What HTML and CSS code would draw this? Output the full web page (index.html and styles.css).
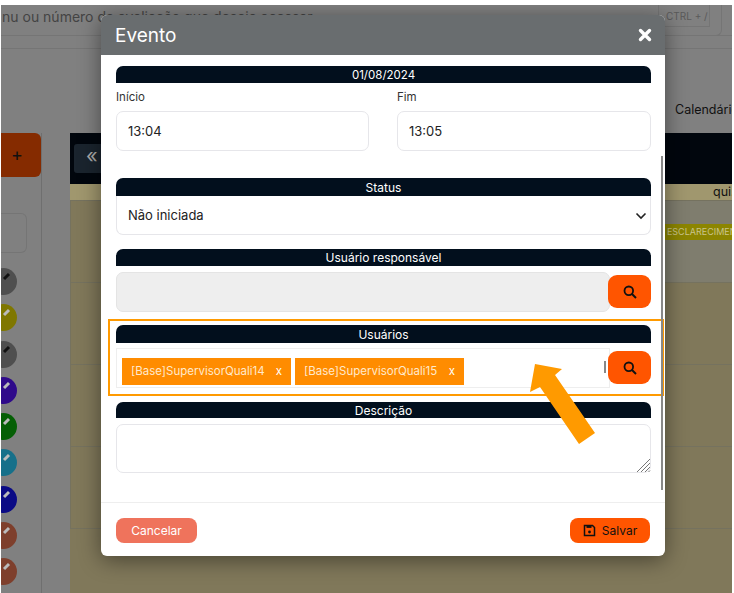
FILE: index.html
```html
<!DOCTYPE html>
<html lang="pt-BR">
<head>
  <meta charset="UTF-8">
  <title>Evento</title>
  <link rel="stylesheet" href="styles.css">
</head>
<body>
  <div class="screen">
    <div class="topbar">
      <span class="search-hint">nu ou número da avaliação que deseja acessar</span>
      <div class="shortcut-box"><span class="shortcut">CTRL + /</span></div>
    </div>
    <div class="subbar"></div>
    <div class="tabs"><span>Calendário</span></div>
    <div class="workspace">
      <div class="side">
        <div class="add-btn">+</div>
        <div class="side-search"></div>
        <div class="dots">
          <span class="dot dot-gray"></span>
          <span class="dot dot-olive"></span>
          <span class="dot dot-gray"></span>
          <span class="dot dot-purple"></span>
          <span class="dot dot-green"></span>
          <span class="dot dot-teal"></span>
          <span class="dot dot-navy"></span>
          <span class="dot dot-brown"></span>
          <span class="dot dot-brown"></span>
        </div>
      </div>
      <div class="calendar">
        <div class="cal-head"><span class="cal-prev">«</span></div>
        <div class="cal-days">
          <span></span><span></span><span></span><span></span><span class="day-name">qui.</span>
        </div>
        <div class="cal-grid">
          <span></span><span></span><span></span><span></span>
          <span class="cell-today"><em class="cal-event">DO ESCLARECIMENTO</em></span>
          <span></span><span></span><span></span><span></span><span></span>
          <span></span><span></span><span></span><span></span><span></span>
          <span></span><span></span><span></span><span></span><span></span>
        </div>
      </div>
    </div>

    <div class="modal">
      <div class="modal-header">
        <h1>Evento</h1>
        <svg class="close" width="14" height="14" viewBox="0 0 14 14"><path d="M2.5 2.5l9 9M11.5 2.5l-9 9" stroke="#fff" stroke-width="3.4" stroke-linecap="round"/></svg>
      </div>
      <div class="modal-body">
        <div class="strip strip-date">01/08/2024</div>
        <div class="times">
          <div>
            <label>Início</label>
            <input class="field" type="text" value="13:04">
          </div>
          <div>
            <label>Fim</label>
            <input class="field" type="text" value="13:05">
          </div>
        </div>

        <div class="strip strip-status">Status</div>
        <div class="select-wrap">
          <select class="field field-select">
            <option>Não iniciada</option>
          </select>
          <svg class="chevron" width="12" height="8" viewBox="0 0 12 8"><path d="M1.5 1.5L6 6l4.5-4.5" fill="none" stroke="#222" stroke-width="1.6"/></svg>
        </div>

        <div class="strip strip-owner">Usuário responsável</div>
        <div class="picker">
          <div class="picker-box picker-disabled"></div>
          <button class="search-btn">
            <svg width="14" height="14" viewBox="0 0 14 14"><circle cx="5.8" cy="5.8" r="4.3" fill="none" stroke="#111" stroke-width="1.8"/><path d="M9 9l4 4" stroke="#111" stroke-width="2"/></svg>
          </button>
        </div>

        <div class="highlight">
          <div class="strip strip-users">Usuários</div>
          <div class="picker picker-users">
            <div class="picker-box">
              <span class="chip">[Base]SupervisorQuali14 <b>x</b></span>
              <span class="chip">[Base]SupervisorQuali15 <b>x</b></span>
              <i class="thumb"></i>
            </div>
            <button class="search-btn">
              <svg width="14" height="14" viewBox="0 0 14 14"><circle cx="5.8" cy="5.8" r="4.3" fill="none" stroke="#111" stroke-width="1.8"/><path d="M9 9l4 4" stroke="#111" stroke-width="2"/></svg>
            </button>
          </div>
        </div>

        <div class="strip strip-desc">Descrição</div>
        <div class="desc-wrap">
          <textarea class="field field-desc"></textarea>
          <svg class="grip" width="15" height="15" viewBox="0 0 15 15"><path d="M14 1L1 14M14 5L5 14M14 9L9 14M14 12.5L12.5 14" stroke="#777" stroke-width="1"/></svg>
        </div>

        <i class="scrollbar"></i>
        <svg class="arrow" width="68" height="82" viewBox="0 0 68 82"><polygon points="5,2 32,7 25,13 65,71 49,82 10,25 0,30" fill="#ff9a00"/></svg>
      </div>
      <div class="modal-footer">
        <button class="btn btn-cancel">Cancelar</button>
        <button class="btn btn-save">
          <svg width="13" height="13" viewBox="0 0 13 13"><path d="M1.5 1.5h8l2 2v8h-10z" fill="none" stroke="#111" stroke-width="1.5"/><rect x="3.5" y="1.5" width="5" height="2.4" fill="#111"/><circle cx="6.5" cy="8" r="1.4" fill="#111"/></svg>
          Salvar
        </button>
      </div>
    </div>
  </div>
</body>
</html>
```

FILE: styles.css
```css
:root {
  --dark: #020f1d;
  --orange: #ff5500;
  --amber: #ff9a00;
  --line: #e6e6ea;
}

* {
  box-sizing: border-box;
}

body {
  margin: 0;
  background: #fff;
  font-family: "Inter", "Liberation Sans", sans-serif;
  color: #222;
}

.screen {
  position: relative;
  margin: 5px 2px 0 1px;
  height: 588px;
  background: #808080;
  overflow: hidden;
}

/* page behind the modal */
.topbar {
  display: flex;
  justify-content: space-between;
  height: 31px;
  padding: 0 10px 0 1px;
  border-bottom: 1px solid #757575;
}

.search-hint {
  margin-top: 2px;
  font-size: 14px;
  line-height: 20px;
  color: #444;
}

.shortcut-box {
  width: 64px;
  height: 31px;
  padding-right: 11px;
  border-right: 1px solid #757575;
  border-bottom: 1px solid #757575;
  border-radius: 0 0 6px 0;
}

.shortcut {
  display: block;
  height: 22px;
  padding-left: 7px;
  border: 1px solid #757575;
  border-top: 0;
  font-size: 10px;
  line-height: 22px;
  color: #5a5a5a;
  white-space: nowrap;
}

.subbar {
  height: 13px;
  border-bottom: 1px solid #757575;
}

.tabs {
  display: flex;
  justify-content: flex-end;
  height: 84px;
  padding-top: 53px;
  font-size: 12.5px;
  line-height: 16px;
  color: #111;
  white-space: nowrap;
}

.tabs span {
  width: 57px;
  overflow: hidden;
}

.workspace {
  display: flex;
  gap: 28px;
}

.side {
  flex: none;
  width: 41px;
  height: 460px;
  border-right: 1px solid #6f6f6f;
}

.add-btn {
  height: 44px;
  padding-right: 18px;
  background: #852b00;
  border-radius: 0 6px 6px 0;
  text-align: right;
  font-size: 18px;
  line-height: 44px;
  color: #111;
}

.side-search {
  width: 26px;
  height: 40px;
  margin-top: 36px;
  border: 1px solid #757575;
  border-left: 0;
  border-radius: 0 6px 6px 0;
}

.dots {
  display: flex;
  flex-direction: column;
  gap: 9.3px;
  margin: 15px 0 0 -11px;
}

.dot {
  position: relative;
  display: block;
  width: 27px;
  height: 27px;
  flex: none;
  border-radius: 50%;
}

.dot::after {
  content: "";
  position: absolute;
  left: 13px;
  top: 7px;
  width: 7px;
  height: 3px;
  background: #bbb;
  transform: rotate(-45deg);
}

.dot-gray { background: #4f4f4f; }
.dot-gray::after { background: #111; }
.dot-olive { background: #7f7700; }
.dot-purple { background: #2f0a8a; }
.dot-green { background: #055f05; }
.dot-teal { background: #16708a; }
.dot-navy { background: #0a0a85; }
.dot-brown { background: #7e3f2c; }

.calendar {
  flex: 1;
  min-width: 0;
  background: #80785a;
}

.cal-head {
  height: 51px;
  padding: 11px 4px;
  background: #01060d;
}

.cal-prev {
  display: block;
  width: 40px;
  height: 29px;
  background: #1a242e;
  border-radius: 3px;
  padding-left: 12px;
  font-size: 20px;
  line-height: 25px;
  color: #aaa;
}

.cal-days,
.cal-grid {
  display: grid;
  grid-template-columns: repeat(4, 145px) 1fr;
}

.cal-days {
  height: 17px;
  background: #a0976e;
  border-bottom: 1px solid #75725f;
}

.day-name {
  padding-left: 63px;
  font-size: 12.5px;
  line-height: 16px;
  color: #111;
  white-space: nowrap;
}

.cal-grid {
  grid-auto-rows: 82px;
}

.cal-grid span {
  min-width: 0;
  border-left: 1px solid #75725f;
  border-bottom: 1px solid #75725f;
}

.cal-grid .cell-today {
  padding-top: 23px;
  background: #7f7d6e;
  overflow: hidden;
}

.cal-event {
  display: block;
  height: 16px;
  background: #8c8500;
  font-style: normal;
  font-size: 9px;
  line-height: 16px;
  color: #c9c48a;
  white-space: nowrap;
}

/* modal */
.modal {
  position: absolute;
  left: 100px;
  top: 10px;
  width: 564px;
  height: 541px;
  background: #fff;
  border-radius: 6px;
  box-shadow: 0 4px 22px rgba(0, 0, 0, 0.45);
}

.modal-header {
  display: flex;
  align-items: center;
  justify-content: space-between;
  height: 40px;
  padding: 0 13px 0 14px;
  background: #696d6f;
  border-radius: 6px 6px 0 0;
}

.modal-header h1 {
  margin: 0;
  font-size: 19px;
  font-weight: 400;
  color: #fff;
}

.modal-body {
  position: relative;
  height: 447px;
  padding: 11px 14px 0 15px;
}

.strip {
  background: var(--dark);
  border-radius: 7px 7px 0 0;
  text-align: center;
  font-size: 12px;
  color: #fff;
}

.strip-date { height: 17px; line-height: 18px; font-size: 11.5px; }
.strip-status { height: 18px; line-height: 19px; margin-top: 27px; }
.strip-owner { height: 17px; line-height: 18px; margin-top: 14px; }
.strip-users { height: 18px; line-height: 19px; }
.strip-desc { height: 16px; line-height: 17px; margin-top: 6px; }

.times {
  display: grid;
  grid-template-columns: 253px 254px;
  justify-content: space-between;
  margin-top: 7px;
}

.times label {
  display: block;
  height: 21px;
  font-size: 11.5px;
  line-height: 14px;
  color: #333;
}

.field {
  display: block;
  width: 100%;
  height: 40px;
  padding: 0 11px;
  background: #fff;
  border: 1px solid var(--line);
  border-radius: 7px;
  font-family: inherit;
  font-size: 13px;
  color: #222;
}

.select-wrap {
  position: relative;
}

.field-select {
  height: 39px;
  appearance: none;
  border-top: 0;
  border-radius: 0 0 7px 7px;
}

.chevron {
  position: absolute;
  right: 4px;
  top: 16px;
}

.picker {
  display: flex;
  margin-top: 6px;
}

.picker-users {
  margin-top: 5px;
}

.picker-box {
  display: flex;
  align-items: center;
  gap: 4px;
  width: 494px;
  height: 40px;
  padding: 7px 5px 0;
  border: 1px solid #eee;
}

.picker-disabled {
  background: #eee;
  border-color: #e4e4e4;
  border-radius: 7px;
}

.chip {
  display: flex;
  justify-content: space-between;
  width: 169px;
  height: 27px;
  padding: 0 9px;
  background: #ff8c00;
  font-size: 11.5px;
  line-height: 27px;
  color: #ffe9cc;
}

.chip b {
  font-weight: 400;
  color: #fff;
}

.thumb {
  width: 2px;
  height: 12px;
  margin: -9px -2px 0 auto;
  background: #888;
}

.search-btn {
  display: flex;
  align-items: center;
  justify-content: center;
  width: 43px;
  height: 33px;
  margin: 3px 0 0 -2px;
  padding: 0;
  background: var(--orange);
  border: 0;
  border-radius: 9px;
}

.highlight {
  margin: 7px -13px 0 -8px;
  height: 77px;
  padding: 4px 11px 0 6px;
  border: 2px solid var(--amber);
}

.desc-wrap {
  position: relative;
  margin-top: 6px;
}

.field-desc {
  height: 49px;
  resize: none;
}

.grip {
  position: absolute;
  right: 0;
  bottom: 0;
}

.scrollbar {
  position: absolute;
  left: 560px;
  top: 101px;
  width: 2px;
  height: 334px;
  background: #888;
}

.arrow {
  position: absolute;
  left: 429px;
  top: 307px;
}

.modal-footer {
  display: flex;
  justify-content: space-between;
  height: 54px;
  padding: 15px 15px 0;
  border-top: 1px solid #eee;
}

.btn {
  display: flex;
  align-items: center;
  justify-content: center;
  gap: 6px;
  height: 25px;
  padding: 0;
  border: 0;
  border-radius: 8px;
  font-family: inherit;
  font-size: 12px;
}

.btn-cancel {
  width: 81px;
  background: #ef735c;
  color: #fff;
}

.btn-save {
  width: 80px;
  background: var(--orange);
  color: #111;
}
```
